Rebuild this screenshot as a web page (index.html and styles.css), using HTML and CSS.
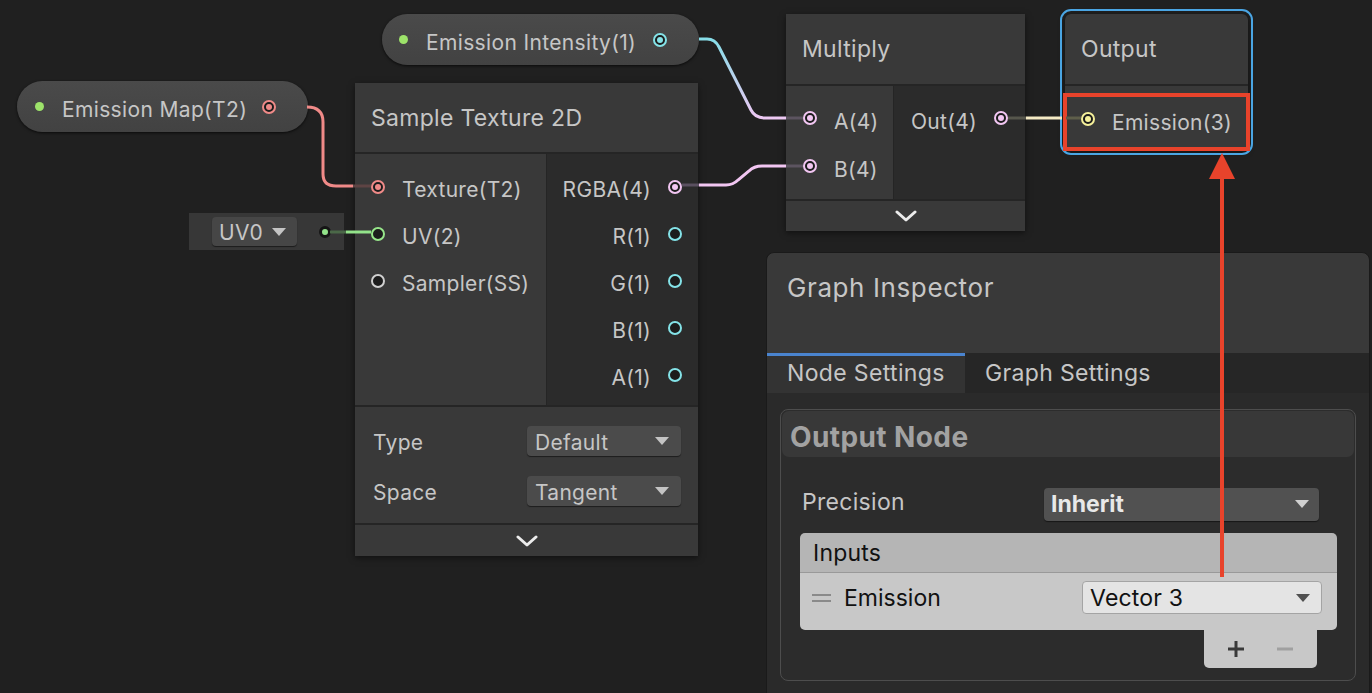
FILE: index.html
```html
<!DOCTYPE html>
<html lang="en">
<head>
<meta charset="utf-8">
<title>Shader Graph</title>
<link rel="stylesheet" href="styles.css">
</head>
<body>
<div class="canvas">

  <div class="pill pill-map">
    <span class="dot"></span>
    <span class="pill-label">Emission Map(T2)</span>
    <span class="port on t-tex"></span>
  </div>

  <div class="pill pill-int">
    <span class="dot"></span>
    <span class="pill-label">Emission Intensity(1)</span>
    <span class="port on t-v1"></span>
  </div>

  <div class="uvnode">
    <div class="dd dd-uv"><span>UV0</span><svg class="caret" viewBox="0 0 14 8"><path d="M0 0H14L7 8Z"/></svg></div>
    <span class="uvport"></span>
  </div>

  <div class="node node-sample">
    <div class="node-title">Sample Texture 2D</div>
    <div class="node-body">
      <div class="col-in">
        <div class="row"><span class="port on t-tex"></span><span class="lbl">Texture(T2)</span></div>
        <div class="row"><span class="port t-v2"></span><span class="lbl">UV(2)</span></div>
        <div class="row"><span class="port t-ss"></span><span class="lbl">Sampler(SS)</span></div>
      </div>
      <div class="col-out">
        <div class="row"><span class="lbl">RGBA(4)</span><span class="port on t-v4"></span></div>
        <div class="row"><span class="lbl">R(1)</span><span class="port t-v1"></span></div>
        <div class="row"><span class="lbl">G(1)</span><span class="port t-v1"></span></div>
        <div class="row"><span class="lbl">B(1)</span><span class="port t-v1"></span></div>
        <div class="row"><span class="lbl">A(1)</span><span class="port t-v1"></span></div>
      </div>
    </div>
    <div class="node-settings">
      <div class="setting"><span class="lbl">Type</span><div class="dd dd-node"><span>Default</span><svg class="caret" viewBox="0 0 14 8"><path d="M0 0H14L7 8Z"/></svg></div></div>
      <div class="setting"><span class="lbl">Space</span><div class="dd dd-node"><span>Tangent</span><svg class="caret" viewBox="0 0 14 8"><path d="M0 0H14L7 8Z"/></svg></div></div>
    </div>
    <div class="node-foot"><svg class="chev" viewBox="0 0 22 12"><path d="M2 2L11 10L20 2"/></svg></div>
  </div>

  <div class="node node-mul">
    <div class="node-title">Multiply</div>
    <div class="node-body">
      <div class="col-in">
        <div class="row"><span class="port on t-v4"></span><span class="lbl">A(4)</span></div>
        <div class="row"><span class="port on t-v4"></span><span class="lbl">B(4)</span></div>
      </div>
      <div class="col-out">
        <div class="row"><span class="lbl">Out(4)</span><span class="port on t-v4"></span></div>
      </div>
    </div>
    <div class="node-foot"><svg class="chev" viewBox="0 0 22 12"><path d="M2 2L11 10L20 2"/></svg></div>
  </div>

  <div class="node node-out">
    <div class="node-title">Output</div>
    <div class="node-body">
      <div class="col-in">
        <div class="row"><span class="port on t-v3"></span><span class="lbl">Emission(3)</span></div>
      </div>
    </div>
  </div>

  <div class="highlight"></div>

  <div class="inspector">
    <div class="insp-head">Graph Inspector</div>
    <div class="tabs">
      <div class="tab active">Node Settings</div>
      <div class="tab">Graph Settings</div>
    </div>
    <div class="insp-content">
      <div class="box">
        <div class="box-head">Output Node</div>
        <div class="box-body">
          <div class="prop">
            <span class="prop-label">Precision</span>
            <div class="dd dd-prec"><span>Inherit</span><svg class="caret" viewBox="0 0 14 8"><path d="M0 0H14L7 8Z"/></svg></div>
          </div>
          <div class="list">
            <div class="list-head">Inputs</div>
            <div class="list-row">
              <span class="handle"><i></i><i></i></span>
              <span class="list-name">Emission</span>
              <div class="dd dd-light"><span>Vector 3</span><svg class="caret" viewBox="0 0 14 8"><path d="M0 0H14L7 8Z"/></svg></div>
            </div>
          </div>
          <div class="list-foot">
            <svg class="pm" viewBox="0 0 20 20"><path d="M10 2V18M2 10H18" stroke="#3a3a3a"/></svg>
            <svg class="pm" viewBox="0 0 20 20"><path d="M2 10H18" stroke="#a0a0a0"/></svg>
          </div>
        </div>
      </div>
    </div>
  </div>

  <svg class="overlay" viewBox="0 0 1372 693" width="1372" height="693">
    <defs>
      <linearGradient id="gInt" x1="0" y1="39" x2="0" y2="118" gradientUnits="userSpaceOnUse">
        <stop offset="0" stop-color="#86dde8"/>
        <stop offset="1" stop-color="#edc8f3"/>
      </linearGradient>
    </defs>
    <g fill="none" stroke-width="3" stroke-linecap="butt">
      <path d="M307,107 Q323,107 323,122 V174 Q323,186 336,186 H353" stroke="#f08a88"/>
      <path d="M353,186 H371" stroke="#5e4444"/>
      <path d="M330,232 H346" stroke="#4b6848"/>
      <path d="M346,232 H371" stroke="#93e38a"/>
      <path d="M699,39 H707 Q715,39 719,47 L751,110 Q755,118 765,118 H786" stroke="url(#gInt)"/>
      <path d="M682,185 H699" stroke="#5a5060"/>
      <path d="M699,185 H726 Q733,185 738,180 L749,171 Q754,166 762,166 H786" stroke="#f2c6f2"/>
      <path d="M786,118 H803 M786,166 H803" stroke="#5c5460"/>
      <path d="M1008,118 H1026" stroke="#56564c"/>
      <path d="M1026,118 H1062" stroke="#f4eac4"/>
      <path d="M1066,118 H1081" stroke="#5e5e4a"/>
    </g>
    <g class="arrow">
      <path d="M1222,176 V577" stroke="#e8432b" stroke-width="4" fill="none"/>
      <path d="M1222,153 L1209,179 L1235,179 Z" fill="#e8432b"/>
    </g>
  </svg>

</div>
</body>
</html>
```

FILE: styles.css
```css
* { box-sizing: border-box; }
html, body { margin: 0; height: 100%; }
body {
  background: #202020;
  font-family: "Inter", "Noto Sans", sans-serif;
  color: #c6c6c6;
  overflow: hidden;
}
.canvas { position: relative; width: 1372px; height: 693px; overflow: hidden; }

/* property pills */
.pill {
  position: absolute;
  display: flex;
  align-items: center;
  height: 51px;
  border-radius: 26px;
  background: linear-gradient(#4a4a4a, #424242);
  box-shadow: 0 1px 3px rgba(0,0,0,.7);
  padding: 0 32px 0 18px;
  font-size: 21px;
  letter-spacing: 0.35px;
}
.pill-map { left: 17px; top: 81px; width: 291px; }
.pill-int { left: 382px; top: 14px; width: 317px; padding-left: 17px; }
.dot { width: 9px; height: 9px; border-radius: 50%; background: #9de36a; flex: none; }
.pill-label { margin-left: 18px; white-space: nowrap; padding-top: 6px; }
.pill .port { margin-left: auto; }

/* ports */
.port {
  width: 14px; height: 14px;
  border-radius: 50%;
  border: 2px solid var(--c);
  background: #1c1c1c;
  flex: none;
  display: flex; align-items: center; justify-content: center;
}
.port.on::after { content: ""; width: 6px; height: 6px; border-radius: 50%; background: var(--c); }
.t-tex { --c: #f08a88; }
.t-v1 { --c: #84e3e8; }
.t-v2 { --c: #97e68a; }
.t-v3 { --c: #f5f09a; }
.t-v4 { --c: #f2c6f2; }
.t-ss { --c: #d0d0d0; }

/* UV node */
.uvnode {
  position: absolute; left: 189px; top: 213px; width: 155px; height: 37px;
  background: #373737;
  display: flex; align-items: center;
  padding: 0 13px 0 23px;
}
.uvport {
  margin-left: auto;
  width: 12px; height: 12px; border-radius: 50%;
  background: #93e38a;
  border: 3px solid #151515;
}

/* dropdowns */
.dd {
  display: flex; align-items: center; justify-content: space-between;
  border-radius: 4px;
  flex: none;
}
.caret { width: 14px; height: 8px; fill: #c4c4c4; }
.dd-uv { width: 85px; height: 29px; background: #464646; padding: 2px 11px 0 7px; font-size: 21px; letter-spacing: 0.3px; box-shadow: 0 1px 1px rgba(0,0,0,.5); }
.dd-uv .caret { margin-top: -2px; }
.dd-node { width: 154px; height: 30px; background: #4b4b4b; padding: 2px 12px 0 8px; font-size: 21px; letter-spacing: 0.3px; box-shadow: 0 1px 1px rgba(0,0,0,.5); }
.dd-node .caret { margin-top: -2px; }

/* nodes */
.node {
  position: absolute;
  display: flex; flex-direction: column;
  background: #393939;
  box-shadow: 0 2px 6px rgba(0,0,0,.5);
}
.node-title {
  height: 71px; flex: none;
  display: flex; align-items: center;
  padding-left: 16px;
  font-size: 23px;
  letter-spacing: 0.3px;
  border-bottom: 2px solid #252525;
}
.node-body { display: flex; border-bottom: 2px solid #252525; flex: none; }
.col-in { background: #393939; border-right: 1px solid #252525; }
.col-out { background: #2b2b2b; flex: 1; display: flex; flex-direction: column; align-items: flex-end; }
.row { display: flex; align-items: center; gap: 17px; font-size: 21px; letter-spacing: 0.3px; white-space: nowrap; }
.lbl { padding-top: 6px; }
.node-foot { flex: 1; display: flex; align-items: center; justify-content: center; }
.chev { width: 22px; height: 12px; fill: none; stroke: #ececec; stroke-width: 3; stroke-linecap: round; stroke-linejoin: round; }

.node-sample { left: 355px; top: 83px; width: 343px; height: 473px; }
.node-sample .node-title { height: 71px; }
.node-sample .node-body { height: 253px; }
.node-sample .col-in { width: 192px; padding: 9px 0 0 16px; }
.node-sample .col-out { padding: 9px 16px 0 0; }
.node-sample .row { height: 47px; }
.node-settings { padding: 9px 17px 7px 18px; border-bottom: 2px solid #252525; flex: none; }
.setting { height: 50px; display: flex; align-items: center; justify-content: space-between; font-size: 21px; letter-spacing: 0.3px; }
.setting .lbl { padding-top: 2px; }

.node-mul { left: 786px; top: 14px; width: 239px; height: 217px; }
.node-mul .node-title { height: 72px; }
.node-mul .node-body { height: 115px; }
.node-mul .col-in { width: 108px; padding: 8px 0 0 17px; }
.node-mul .col-out { padding: 8px 17px 0 0; }
.node-mul .row { height: 48px; }

.node-out {
  left: 1065px; top: 14px; width: 183px; height: 136px;
  outline: 2px solid #4aa5e3; outline-offset: 3px; border-radius: 6px;
}
.node-out .node-title { height: 72px; border-radius: 6px 6px 0 0; }
.node-out .node-body { flex: 1; border-bottom: 0; }
.node-out .col-in { flex: 1; border-right: 0; padding: 9px 0 0 16px; border-radius: 0 0 6px 6px; }
.node-out .row { height: 48px; }

.highlight {
  position: absolute; left: 1063px; top: 93px; width: 187px; height: 58px;
  border: 4px solid #e8432b;
  z-index: 4;
}

/* inspector */
.inspector {
  position: absolute; left: 766px; top: 252px; width: 604px; height: 460px;
  background: #393939;
  border: 1px solid #1a1a1a;
  border-radius: 8px 8px 0 0;
  display: flex; flex-direction: column;
  overflow: hidden;
  z-index: 3;
}
.insp-head { height: 100px; flex: none; padding: 20px 0 0 20px; font-size: 26px; line-height: 30px; letter-spacing: 0.6px; }
.tabs { display: flex; height: 40px; flex: none; background: #262626; font-size: 23px; letter-spacing: 0.35px; }
.tab { display: flex; align-items: center; padding: 0 20px; }
.tab.active { width: 198px; background: #333333; border-top: 3px solid #4a84cf; padding-bottom: 3px; }
.insp-content { flex: 1; background: #2a2a2a; padding: 16px 13px 0 13px; }
.box { border: 1px solid #4d4d4d; border-radius: 8px; background: #2c2c2c; padding: 1px; }
.box-head {
  height: 46px; background: #383838; border-radius: 7px;
  display: flex; align-items: center; padding: 5px 0 0 8px;
  font-size: 28px; font-weight: 700; color: #a2a2a2; letter-spacing: 0.4px;
}
.box-body { padding: 30px 17px 11px 18px; display: flex; flex-direction: column; }
.prop { display: flex; align-items: center; justify-content: space-between; height: 34px; padding-left: 2px; font-size: 23px; letter-spacing: 0.3px; }
.prop-label { padding-bottom: 4px; }
.dd-prec {
  width: 275px; height: 33px; margin-right: 18px;
  background: #515151; padding: 0 10px 0 7px;
  font-size: 23px; font-weight: 700; color: #e8e8e8; letter-spacing: 0;
  box-shadow: 0 1px 1px rgba(0,0,0,.5);
}
.dd-prec .caret { fill: #d0d0d0; }
.list { margin-top: 12px; border-radius: 5px; overflow: hidden; color: #111; }
.list-head { height: 40px; background: #b5b5b5; border-bottom: 1px solid #999; display: flex; align-items: center; padding-left: 13px; font-size: 23px; letter-spacing: 0.2px; }
.list-row { height: 57px; background: #c8c8c8; display: flex; align-items: center; padding: 0 15px 8px 12px; font-size: 23px; }
.handle { display: flex; flex-direction: column; gap: 4px; width: 19px; margin-right: 13px; }
.handle i { display: block; height: 2px; background: #8a8a8a; }
.list-name { flex: 1; }
.dd-light {
  width: 240px; height: 33px;
  background: #e4e4e4; border: 1px solid #a4a4a4;
  padding: 0 11px 0 7px; font-size: 23px; letter-spacing: 0.2px; color: #111;
}
.dd-light .caret { fill: #505050; }
.list-foot {
  align-self: flex-end; margin-right: 20px;
  width: 113px; height: 38px;
  background: #c8c8c8; border-radius: 0 0 5px 5px;
  display: flex; align-items: center; justify-content: space-between;
  padding: 0 22px 0 22px;
}
.pm { width: 20px; height: 20px; stroke-width: 3; fill: none; }

.overlay { position: absolute; left: 0; top: 0; z-index: 5; pointer-events: none; }
```
